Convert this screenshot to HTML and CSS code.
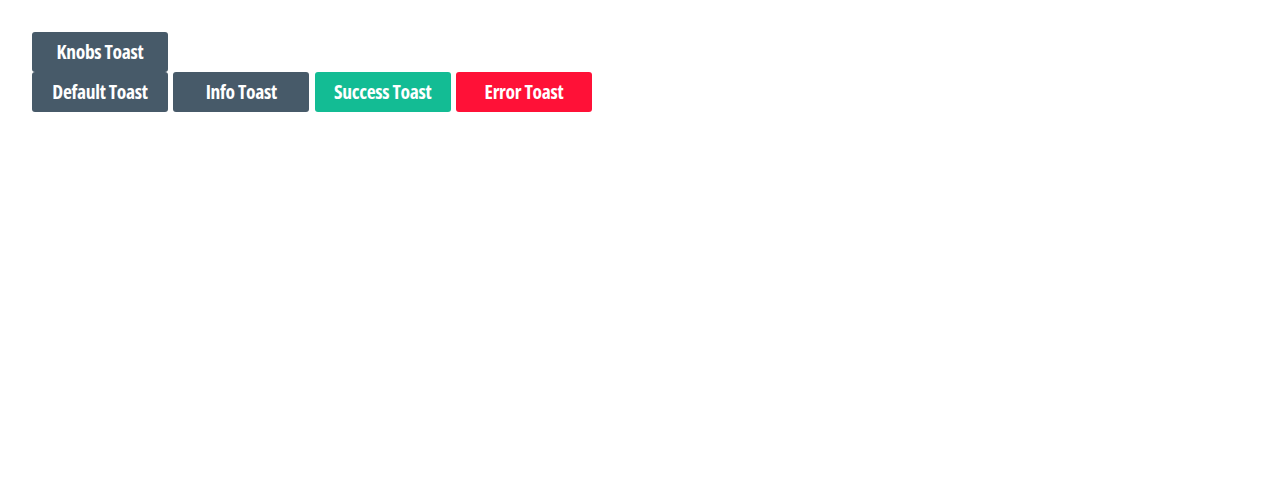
FILE: index.html
```html
<!DOCTYPE html>
<html>
<head>
<meta charset="utf-8">
<link rel="stylesheet" href="styles.css">
</head>
<body>
<div class="page">
  <div class="row">
    <button class="btn btn-slate">Knobs Toast</button>
  </div>
  <div class="row">
    <button class="btn btn-slate">Default Toast</button>
    <button class="btn btn-slate">Info Toast</button>
    <button class="btn btn-green">Success Toast</button>
    <button class="btn btn-red">Error Toast</button>
  </div>
</div>
</body>
</html>
```
FILE: styles.css
```css
html, body {
  margin: 0;
  padding: 0;
  background: #ffffff;
}
.page {
  padding: 32px;
}
.row {
  display: flex;
  gap: 5.33px;
}
.btn {
  width: 136px;
  height: 40px;
  border: none;
  border-radius: 3px;
  color: #ffffff;
  font-family: "Open Sans", sans-serif;
  font-stretch: 75%;
  font-weight: 700;
  font-size: 19.5px;
  letter-spacing: -0.3px;
  padding: 0 0 1px 0;
  margin: 0;
  cursor: pointer;
}
.btn-slate { background: #475a69; }
.btn-green { background: #13bc94; }
.btn-red { background: #ff1137; }
```
